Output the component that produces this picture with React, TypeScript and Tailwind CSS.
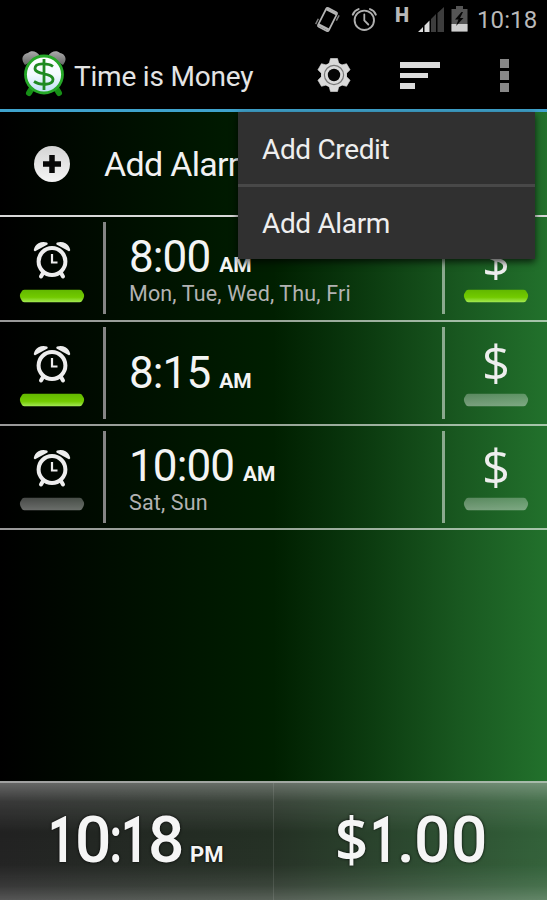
import React from "react";

type Alarm = { time: string; days?: string; alarmOn: boolean; moneyOn: boolean };

const alarms: Alarm[] = [
  { time: "8:00", days: "Mon, Tue, Wed, Thu, Fri", alarmOn: true, moneyOn: true },
  { time: "8:15", alarmOn: true, moneyOn: false },
  { time: "10:00", days: "Sat, Sun", alarmOn: false, moneyOn: false },
];

function StatusBar() {
  return (
    <div className="flex h-[38px] items-start bg-black text-[#b9b9b9]">
      <svg className="ml-[315px] mt-[5px]" width="26" height="29" viewBox="0 0 26 29" fill="none" stroke="#b5b5b5">
        <g transform="rotate(27 12.5 14.5)">
          <rect x="6.500" y="4" width="12" height="21" rx="1.5" strokeWidth="1.7" />
          <path d="M7 5.700h11M7 23h11" strokeWidth="2.400" />
          <path d="M4 18v6M20.900 5.500v6" strokeWidth="1.500" opacity=".7" />
        </g>
      </svg>
      <svg className="ml-[10px] mt-[7px]" width="27" height="25" viewBox="0 0 27 25" fill="none" stroke="#b0b0b0" strokeLinecap="round">
        <circle cx="13.3" cy="13.3" r="9.7" strokeWidth="1.9" />
        <path d="M13.3 7.5v6l4 4" strokeWidth="1.8" />
        <path d="M1.8 7.6C2.8 5 4.8 3 7.6 2.1M24.8 7.6c-1-2.6-3-4.6-5.8-5.5" strokeWidth="2" />
      </svg>
      <span className="ml-[17px] mt-[5px] w-[14px] text-[20px] leading-[20px] font-black">H</span>
      <svg className="ml-[9px] mt-[7px]" width="27" height="26" viewBox="0 0 27 26">
        <path d="M0 25 5 20v5zM6.5 18.5l5-5V25h-5z" fill="#dcdcdc" />
        <path d="m13 12 5-5V25h-5zM19.500 6 26 0v25h-6.500z" fill="#3d3d3d" />
      </svg>
      <svg className="ml-[6px] mt-[6px]" width="17" height="26" viewBox="0 0 17 26">
        <path d="M5 0h7v3h4.500v22.500H.5V3H5z" fill="#555" />
        <path d="M.5 18h16v7.500H.5z" fill="#cfcfcf" />
        <path d="M10.500 6 4 13.500h3.500L5 20l7.500-8H9l3-6z" fill="#050505" />
      </svg>
      <span className="ml-[9px] mt-[6px] text-[24px] leading-[28px] tracking-[0.100px]">10:18</span>
    </div>
  );
}

function Logo() {
  return (
    <svg className="ml-[21px] mt-[12px]" width="46" height="48" viewBox="0 0 46 48">
      <defs>
        <linearGradient id="bell" x1="0" y1="0" x2="0" y2="1">
          <stop stopColor="#aaa" />
          <stop offset="1" stopColor="#666" />
        </linearGradient>
        <linearGradient id="face" x1="0" y1="0" x2="0" y2="1">
          <stop stopColor="#fff" />
          <stop offset=".5" stopColor="#f3faff" />
          <stop offset="1" stopColor="#bcdcf5" />
        </linearGradient>
      </defs>
      <path d="M4 15C-1 9 2 4 7 3c3-3 9-2 12 3zM42 15c5-6 2-11-3-12-3-3-9-2-12 3z" fill="url(#bell)" />
      <path d="m11 38-3 5M35 38l3 5" stroke="#168f16" strokeWidth="6" strokeLinecap="round" />
      <circle cx="23" cy="24.500" r="18.500" fill="url(#face)" stroke="#26a828" strokeWidth="2.800" />
      <path d="M32 16.500c-4-3-18-4.500-18 2s18 4 18 11c0 6-13 6-19 2M23 9v31" fill="none" stroke="#1f8a21" strokeWidth="2.800" />
    </svg>
  );
}

function ActionBar() {
  return (
    <div className="flex h-[74px] border-b-[3px] border-[#3fa3cc] bg-black">
      <Logo />
      <span className="ml-[7px] mt-[21px] w-[200px] whitespace-nowrap text-[28px] leading-[36px] tracking-[-0.200px] text-[#e4e4e4]">Time is Money</span>
      <svg className="ml-[43px] mt-[20px]" width="34" height="34" viewBox="-17 -17 34 34">
        <g fill="#dadada">
          <circle r="13" />
          {[0, 60, 120, 180, 240, 300].map((a) => (
            <path key={a} d="M-5-11-3.500-16.500h7L5-11z" transform={`rotate(${a})`} strokeLinejoin="round" stroke="#dadada" strokeWidth=".6" />
          ))}
        </g>
        <circle r="9.600" fill="none" stroke="#777" strokeWidth="1.200" />
        <circle r="6.200" fill="#050505" />
      </svg>
      <div className="ml-[49px] mt-[24px] flex w-10 flex-col gap-[5px]">
        <div className="h-[5.500px] w-[40px] bg-[#dcdcdc]" />
        <div className="h-[5.500px] w-[28px] bg-[#dcdcdc]" />
        <div className="h-[5.500px] w-[15px] bg-[#dcdcdc]" />
      </div>
      <div className="ml-[60px] mt-[21px] flex flex-col gap-[3px]">
        <div className="size-[9px] bg-[#888]" />
        <div className="size-[9px] bg-[#888]" />
        <div className="size-[9px] bg-[#888]" />
      </div>
    </div>
  );
}

function AlarmIcon() {
  return (
    <svg width="38" height="40" viewBox="0 0 38 40" fill="none" stroke="#ededed" strokeLinecap="round">
      <circle cx="19" cy="21.500" r="13.400" strokeWidth="4" />
      <path d="M19 14v8.500h5.500" strokeWidth="2.200" strokeLinecap="butt" />
      <path d="m10 33-2 3.500M28 33l2 3.500" strokeWidth="4" />
      <path d="M2 10C3 5 8 2 13.500 3.600zM36 10C35 5 30 2 24.500 3.600z" fill="#ededed" strokeWidth="2.400" strokeLinejoin="round" />
    </svg>
  );
}

function Toggle({ on }: { on: boolean }) {
  return (
    <svg width="66" height="14" viewBox="0 0 66 14">
      <defs>
        <linearGradient id="on" x1="0" y1="0" x2="0" y2="1">
          <stop stopColor="#62b800" />
          <stop offset=".6" stopColor="#72ca00" />
          <stop offset="1" stopColor="#a4ea55" />
        </linearGradient>
        <linearGradient id="off" x1="0" y1="0" x2="0" y2="1">
          <stop stopColor="#fff" stopOpacity=".28" />
          <stop offset="1" stopColor="#fff" stopOpacity=".42" />
        </linearGradient>
      </defs>
      <path d="M5.500.700h55q1.500 0 2.400 1.100 2.200 2.900 2.200 5.200t-2.200 5.200q-.9 1.100-2.400 1.100h-55q-1.500 0-2.400-1.100Q.900 9.300.900 7t2.200-5.200Q4 .700 5.500.700z" fill={on ? "url(#on)" : "url(#off)"} />
    </svg>
  );
}

function AlarmRow({ alarm, first }: { alarm: Alarm; first: boolean }) {
  return (
    <div className={`flex border-b-2 border-white/60 ${first ? "h-[105px]" : "h-[104px]"}`}>
      <div className={`flex w-[103px] flex-col items-center ${first ? "pt-[23px]" : "pt-[22px]"}`}>
        <AlarmIcon />
        <div className="mt-[9px] flex"><Toggle on={alarm.alarmOn} /></div>
      </div>
      <div className="mt-[5px] h-[92px] w-[3px] bg-[#858585]" />
      <div className="flex w-[336px] flex-col justify-center pl-[23px] whitespace-nowrap">
        <div className="flex items-baseline text-[44px] leading-[52px] tracking-[-0.900px] text-[#f4f4f4]">
          {alarm.time}
          <span className="ml-[9px] text-[21px] leading-[26px] font-bold tracking-[-0.200px]">AM</span>
        </div>
        {alarm.days && <div className="-mt-px text-[21.500px] leading-[24px] tracking-[0.150px] text-[#b2b2b2]">{alarm.days}</div>}
      </div>
      <div className="mt-[5px] h-[92px] w-[3px] bg-white/50" />
      <div className={`flex flex-1 flex-col items-center ${first ? "pt-[12px]" : "pt-[11px]"}`}>
        <span className="h-[60px] font-['Open_Sans',sans-serif] text-[49px] leading-[58px] text-[#eee]">$</span>
        <div className="flex"><Toggle on={alarm.moneyOn} /></div>
      </div>
    </div>
  );
}

function Menu() {
  return (
    <div className="absolute top-[112px] left-[238px] h-[147px] w-[297px] bg-[#303030] pl-6 text-[28px] tracking-[-0.350px] text-[#eee] shadow-[0_3px_7px_rgba(0,0,0,0.7)]">
      <div className="-ml-6 h-[75px] border-b-[3px] border-[#484848] pl-6 leading-[75px]">Add Credit</div>
      <div className="leading-[74px]">Add Alarm</div>
    </div>
  );
}

function NarrowOne() {
  return (
    <span className="w-[27px]">
      <span className="inline-block origin-left scale-x-72 font-bold">1</span>
    </span>
  );
}

function Footer() {
  return (
    <div className="h-[119px] bg-[linear-gradient(90deg,#1d1d1d,#202c20_50%,#2e5e35)]">
      <div className="flex h-full border-t-2 border-white/45 bg-[linear-gradient(180deg,rgba(255,255,255,.32),rgba(255,255,255,.12)_16%,rgba(255,255,255,.02)_42%,rgba(255,255,255,.03)_70%,rgba(255,255,255,.12)_88%,rgba(255,255,255,.25))] text-[#f5f5f5] [text-shadow:0_0_3px_#000]">
        <div className="flex w-[274px] items-baseline border-r border-white/10 pt-[20px] pl-[48px]">
          <span className="flex text-[64px] leading-[76px] font-medium">
            <NarrowOne />
            <span className="w-[34px]">0</span>
            <span className="w-[12px]"><span className="inline-block origin-left scale-x-80">:</span></span>
            <NarrowOne />
            <span className="w-[34px]">8</span>
          </span>
          <span className="ml-[8px] text-[22px] font-bold">PM</span>
        </div>
        <div className="flex pt-[20px] pl-[61px] text-[64px] leading-[76px] font-medium">
          <span className="w-[35px] font-['Open_Sans',sans-serif] text-[61px] leading-[72px] font-semibold">
            <span className="inline-block origin-left scale-x-95">$</span>
          </span>
          <NarrowOne />
          <span className="w-[17px]">.</span>
          <span className="w-[37px]">0</span>
          <span>0</span>
        </div>
      </div>
    </div>
  );
}

export default function App() {
  return (
    <div className="relative flex h-[900px] w-[547px] flex-col overflow-hidden bg-[linear-gradient(90deg,#000_0%,#001000_25%,#001f00_50%,#0c3c10_68%,#195820_84%,#22712c_100%)] font-[Roboto,sans-serif]">
      <StatusBar />
      <ActionBar />
      <div className="flex h-[105px] items-center border-b-2 border-[#d8d8d8] pl-[34px]">
        <svg width="36" height="36" viewBox="0 0 36 36">
          <defs>
            <linearGradient id="plus" x1="0" y1="0" x2="0" y2="1">
              <stop stopColor="#d4d4d4" />
              <stop offset="1" stopColor="#f5f5f5" />
            </linearGradient>
          </defs>
          <circle cx="18" cy="18" r="18" fill="url(#plus)" />
          <path d="M18 9v18M9 18h18" stroke="#080808" strokeWidth="5.500" />
        </svg>
        <span className="ml-[34px] text-[34px] leading-[40px] tracking-[-0.700px] text-[#f2f2f2]">Add Alarm</span>
      </div>
      {alarms.map((a, i) => (
        <AlarmRow key={a.time} alarm={a} first={i === 0} />
      ))}
      <div className="flex-1" />
      <Footer />
      <Menu />
    </div>
  );
}
